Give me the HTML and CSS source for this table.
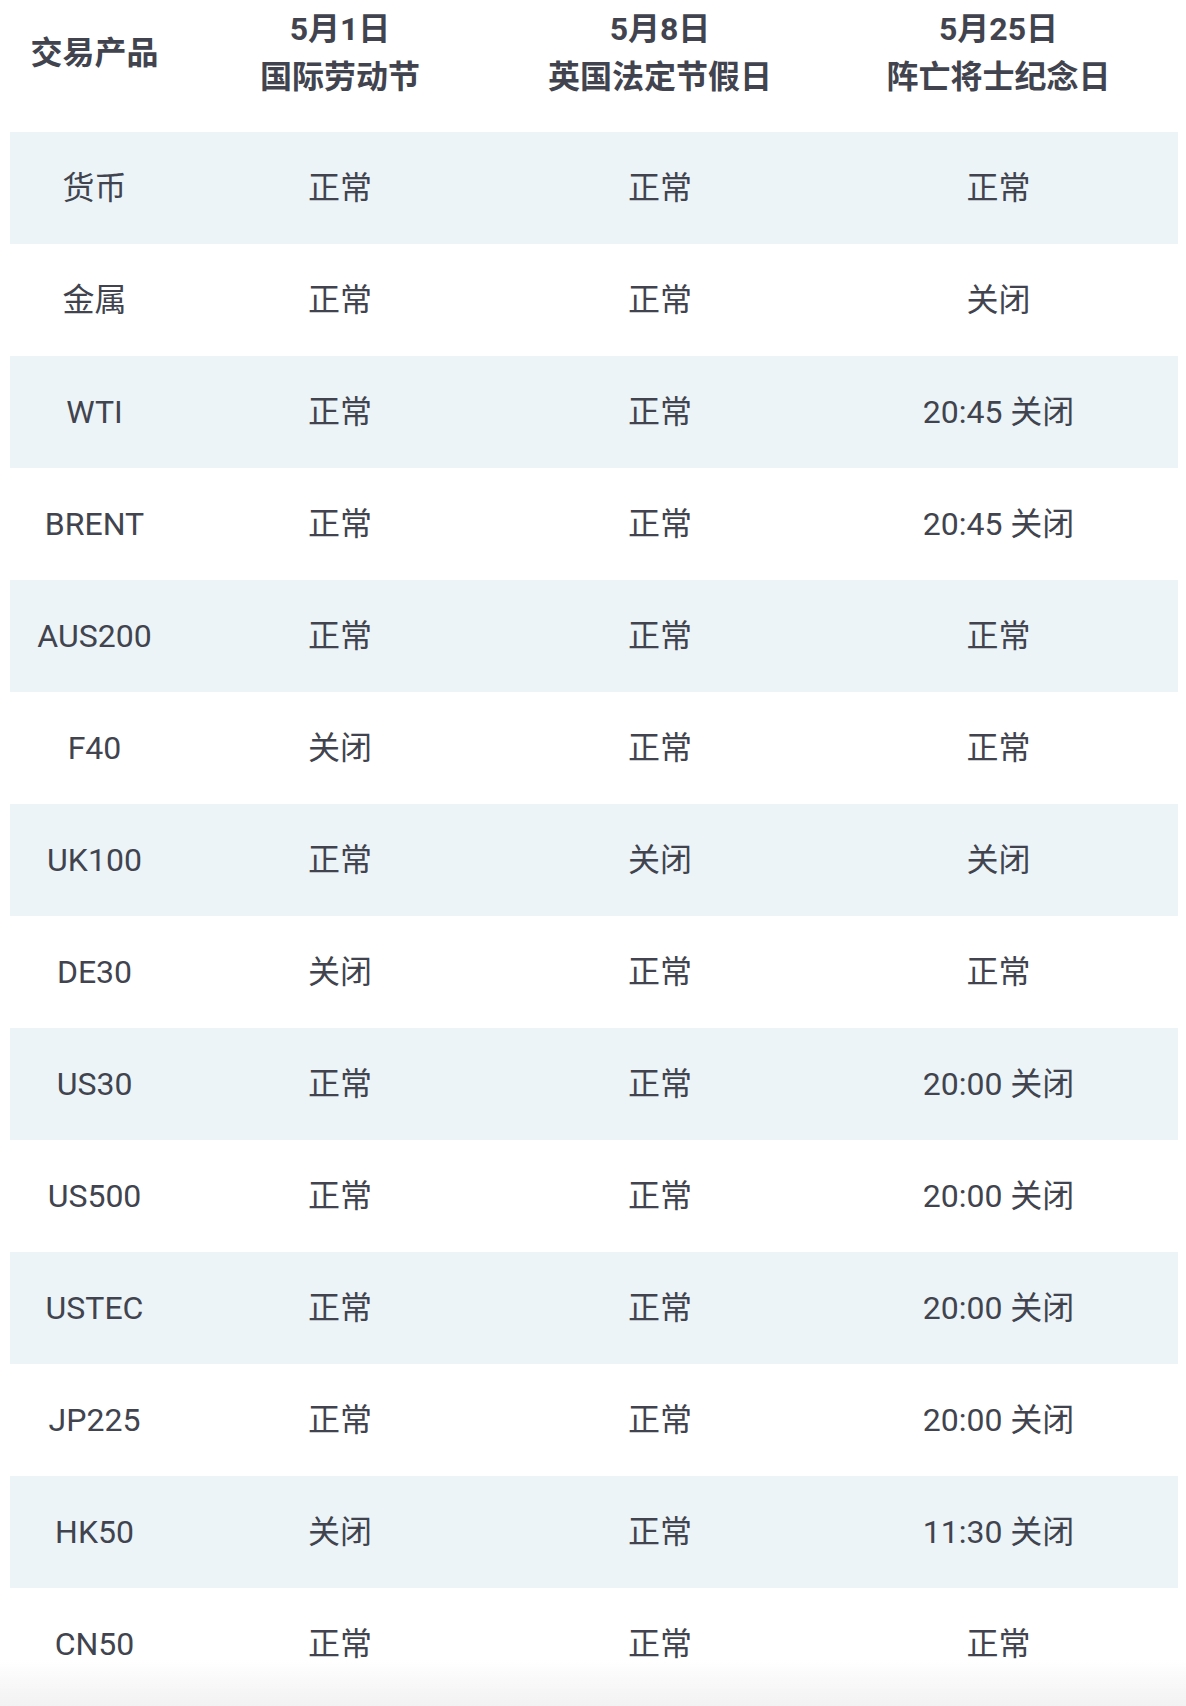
FILE: index.html
```html
<!DOCTYPE html>
<html lang="zh-CN">
<head>
<meta charset="utf-8">
<title>交易时间</title>
<link rel="stylesheet" href="styles.css">
</head>
<body>
<div class="wrap">
<table class="sched">
  <colgroup>
    <col class="c1"><col class="c2"><col class="c3"><col class="c4">
  </colgroup>
  <thead>
    <tr>
      <th>交易产品</th>
      <th>5月1日<br>国际劳动节</th>
      <th>5月8日<br>英国法定节假日</th>
      <th>5月25日<br>阵亡将士纪念日</th>
    </tr>
  </thead>
  <tbody>
    <tr><td>货币</td><td>正常</td><td>正常</td><td>正常</td></tr>
    <tr><td>金属</td><td>正常</td><td>正常</td><td>关闭</td></tr>
    <tr><td>WTI</td><td>正常</td><td>正常</td><td>20:45 关闭</td></tr>
    <tr><td>BRENT</td><td>正常</td><td>正常</td><td>20:45 关闭</td></tr>
    <tr><td>AUS200</td><td>正常</td><td>正常</td><td>正常</td></tr>
    <tr><td>F40</td><td>关闭</td><td>正常</td><td>正常</td></tr>
    <tr><td>UK100</td><td>正常</td><td>关闭</td><td>关闭</td></tr>
    <tr><td>DE30</td><td>关闭</td><td>正常</td><td>正常</td></tr>
    <tr><td>US30</td><td>正常</td><td>正常</td><td>20:00 关闭</td></tr>
    <tr><td>US500</td><td>正常</td><td>正常</td><td>20:00 关闭</td></tr>
    <tr><td>USTEC</td><td>正常</td><td>正常</td><td>20:00 关闭</td></tr>
    <tr><td>JP225</td><td>正常</td><td>正常</td><td>20:00 关闭</td></tr>
    <tr><td>HK50</td><td>关闭</td><td>正常</td><td>11:30 关闭</td></tr>
    <tr><td>CN50</td><td>正常</td><td>正常</td><td>正常</td></tr>
  </tbody>
</table>
</div>
<div class="fade"></div>
</body>
</html>
```

FILE: styles.css
```css
html, body {
  margin: 0;
  padding: 0;
  background: #ffffff;
}

body {
  font-family: "Roboto", "Noto Sans CJK SC", sans-serif;
  color: #41444e;
}

.wrap {
  padding: 0 8px 0 10px;
}

.sched {
  width: 1168px;
  border-collapse: collapse;
  border-spacing: 0;
  table-layout: fixed;
}

.c1 { width: 169px; }
.c2 { width: 322px; }
.c3 { width: 318px; }
.c4 { width: 359px; }

.sched th {
  font-size: 32px;
  font-weight: 700;
  line-height: 48px;
  padding: 5px 0 31px;
  text-align: center;
  vertical-align: middle;
  color: #41444e;
}

.sched td {
  height: 112px;
  padding: 0;
  font-size: 32px;
  font-weight: 400;
  line-height: 40px;
  text-align: center;
  vertical-align: middle;
  white-space: nowrap;
}

.sched tbody tr:nth-child(odd) td {
  background: #ecf4f8;
}

.fade {
  position: fixed;
  left: 0;
  right: 0;
  bottom: 0;
  height: 46px;
  background: linear-gradient(to bottom, rgba(242, 242, 242, 0), #f2f2f2);
  pointer-events: none;
}
```
